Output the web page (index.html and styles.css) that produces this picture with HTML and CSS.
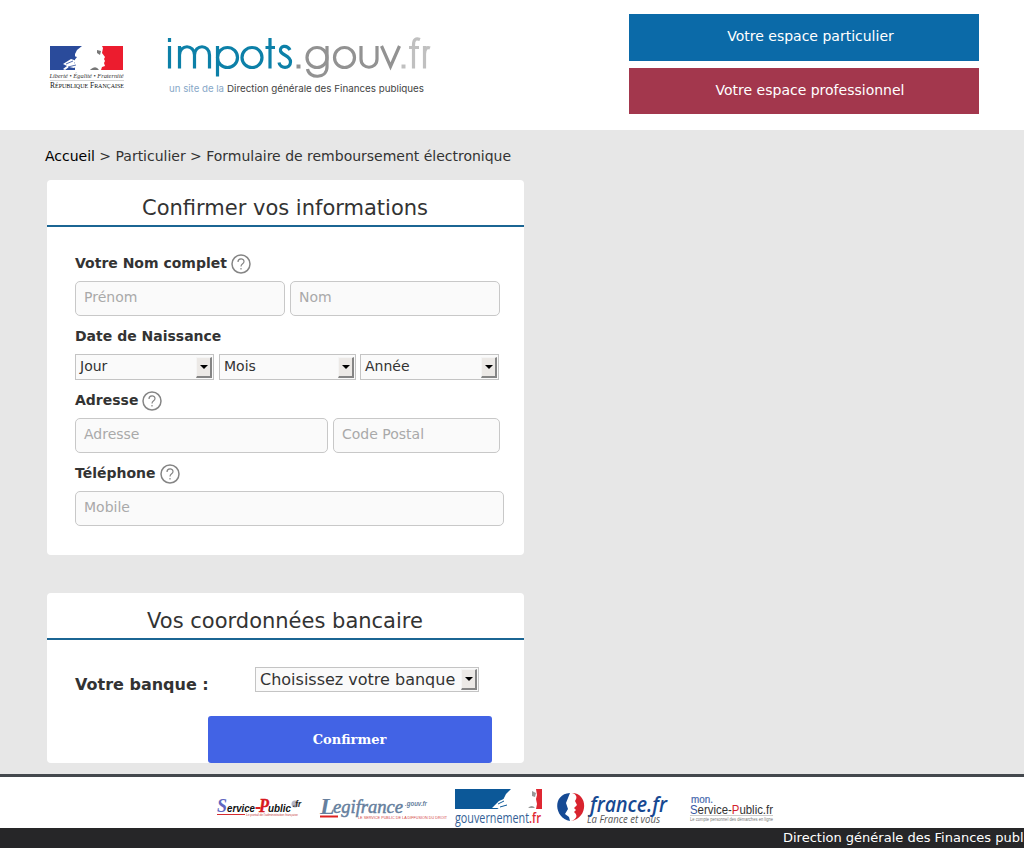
FILE: index.html
```html
<!DOCTYPE html>
<html lang="fr">
<head>
<meta charset="utf-8">
<title>Formulaire</title>
<link rel="stylesheet" href="styles.css">
</head>
<body>
<header class="header">
  <svg class="marianne" width="78" height="46" viewBox="0 0 78 46">
    <rect x="2" y="1" width="25" height="24" fill="#2a4b9b"/>
    <path d="M27 1h7l-5 4-3 6 3 1-4 5 3 3-2 5h-3z" fill="#2a4b9b"/>
    <path d="M15 19l8-5 6 2-3 2 5 2-5 3-5-1-4 3-2-1 4-3z" fill="#fff"/>
    <path d="M18 19l7-3M20 22l8-2" stroke="#2a4b9b" stroke-width=".8" fill="none"/>
    <path d="M75 1v24H53l1-3 3-1-1-3 1-2-1-2 1-2-3-4 1-5-1-2z" fill="#ec1c2e"/>
    <path d="M49 5l4 1-1 4-3-2zM43 24q5-4 8 1h-9z" fill="#777"/>
    <text x="1.500" y="33" textLength="74" lengthAdjust="spacingAndGlyphs" class="serif" font-size="6" font-style="italic" fill="#333">Liberté • Égalité • Fraternité</text>
    <path d="M2 35.500h74" stroke="#aaa" stroke-width=".5"/>
    <text x="2" y="43" textLength="74" lengthAdjust="spacingAndGlyphs" class="serif" font-size="7.500" fill="#111">R<tspan font-size="6">ÉPUBLIQUE</tspan> F<tspan font-size="6">RANÇAISE</tspan></text>
  </svg>
  <svg class="wordmark" width="270" height="66" viewBox="0 0 270 66">
    <g fill="none" stroke-width="3.200">
      <g stroke="#0c80a8">
        <path d="M5.500 12v22.500M5.500 4v4M15.500 34.500V12M15.500 21C15.500 10 30.500 10 30.500 21V34.500M30.500 21C30.500 10 45.500 10 45.500 21V34.500"/>
        <path d="M53.500 12v30.500"/><circle cx="63.500" cy="23.500" r="10"/><circle cx="88" cy="23.500" r="10"/>
        <path d="M106 4v30.500M101.500 13.500h9.500M126 16C123 10 115.500 12 116.500 17C118 22 126.500 21 126.500 28C126.500 35 116 35 115 28.500"/>
      </g>
      <g stroke="#929292">
        <circle cx="153" cy="23.500" r="10"/><path d="M163 12v21C163 45 145 45 143.500 35"/>
        <circle cx="180.500" cy="23.500" r="10"/>
        <path d="M197 12v13C197 36 213 36 213 25V12M217.500 12l9 20.500 9-20.500"/>
      </g>
      <path stroke="#c0c0c0" d="M249.500 34.500V11C249.500 5 252 4 256 5.500M245 13.500h10M260.500 34.500V12M260.500 20Q261 12 266 14"/>
    </g>
    <path d="M132.500 30.500h4v4h-4z" fill="#929292"/><path d="M237.500 30.500h4v4h-4z" fill="#c0c0c0"/>
    <text x="5" y="57.500" class="geo" font-size="9.500" textLength="55" lengthAdjust="spacingAndGlyphs" fill="#88a8c8">un site de la</text>
    <text x="63" y="57.500" class="geo" font-size="9.500" textLength="197" lengthAdjust="spacingAndGlyphs" fill="#444">Direction générale des Finances publiques</text>
  </svg>
  <nav class="spaces">
    <div class="space space-blue">Votre espace particulier</div>
    <div class="space space-red">Votre espace professionnel</div>
  </nav>
</header>
<main class="main">
  <div class="crumbs"><span class="home">Accueil</span> &gt; Particulier &gt; Formulaire de remboursement électronique</div>
  <section class="card card-info">
    <h2 class="title">Confirmer vos informations</h2>
    <div class="fields">
      <div class="label">Votre Nom complet <svg class="help" width="20" height="20" viewBox="0 0 20 20"><circle cx="10" cy="10" r="9"/><path d="M7 8C7 4 13 4 13 7.500C13 10 10 9.500 10 12.500M10 14v1.500"/></svg></div>
      <div class="row"><div class="input half">Prénom</div><div class="input half">Nom</div></div>
      <div class="label label-date">Date de Naissance</div>
      <div class="row row-date">
        <div class="select day">Jour<i class="arrow"></i></div>
        <div class="select month">Mois<i class="arrow"></i></div>
        <div class="select year">Année<i class="arrow"></i></div>
      </div>
      <div class="label label-address">Adresse <svg class="help" width="20" height="20" viewBox="0 0 20 20"><circle cx="10" cy="10" r="9"/><path d="M7 8C7 4 13 4 13 7.500C13 10 10 9.500 10 12.500M10 14v1.500"/></svg></div>
      <div class="row"><div class="input address">Adresse</div><div class="input postal">Code Postal</div></div>
      <div class="label label-phone">Téléphone <svg class="help" width="20" height="20" viewBox="0 0 20 20"><circle cx="10" cy="10" r="9"/><path d="M7 8C7 4 13 4 13 7.500C13 10 10 9.500 10 12.500M10 14v1.500"/></svg></div>
      <div class="row"><div class="input phone">Mobile</div></div>
    </div>
  </section>
  <section class="card card-bank">
    <h2 class="title">Vos coordonnées bancaire</h2>
    <div class="bank-row"><span class="bank-label">Votre banque :</span><div class="select bank">Choisissez votre banque<i class="arrow"></i></div></div>
    <div class="confirm">Confirmer</div>
  </section>
</main>
<footer>
  <div class="partners">
    <svg width="590" height="50" viewBox="210 777 590 50">
      <g font-style="italic" font-weight="bold" class="sans">
        <text x="217" y="812" font-size="18" fill="#6066c0" class="serif">S</text>
        <text x="227" y="812" font-size="10" textLength="28" lengthAdjust="spacingAndGlyphs" fill="#111">ervice</text>
        <path d="M255.500 808h5" stroke="#d22" stroke-width="2"/>
        <text x="259" y="812" font-size="18" textLength="10" lengthAdjust="spacingAndGlyphs" fill="#d81920" stroke="#d81920" stroke-width=".4" class="serif">P</text>
        <text x="268" y="812" font-size="10" textLength="23" lengthAdjust="spacingAndGlyphs" fill="#111">ublic</text>
        <circle cx="295" cy="804" r="3.500" fill="#b4b4c4"/>
        <text x="293" y="807" font-size="9" textLength="8" lengthAdjust="spacingAndGlyphs" fill="#222">.fr</text>
      </g>
      <path d="M217 814.500h28" stroke="#d42b30"/>
      <text x="246" y="816" class="sans" font-size="3.500" textLength="52" fill="#c55">Le portail de l'administration française</text>
      <g class="serif" font-style="italic" fill="#667f9e">
        <text x="320" y="813.500" font-size="24" font-weight="bold">L</text>
        <text x="333" y="813" font-size="19" textLength="70" lengthAdjust="spacingAndGlyphs" stroke="#667f9e" stroke-width=".5">egifrance</text>
        <text x="405" y="805.500" class="sans" font-weight="bold" font-size="6.500" textLength="22" lengthAdjust="spacingAndGlyphs">.gouv.fr</text>
      </g>
      <path d="M320 816.500h18" stroke="#d22" stroke-width="2"/>
      <text x="358" y="819" class="sans" font-size="4" textLength="89" lengthAdjust="spacingAndGlyphs" fill="#d34545">LE SERVICE PUBLIC DE LA DIFFUSION DU DROIT</text>
      <path d="M455 789h56l-5 5-3 6 2 1-4 4-3 4h-43z" fill="#0c5898"/>
      <path d="M492 808l7-7 7-3 5 2-4 2 5 3-7 1-5 3-3-1 3-3-3 3z" fill="#fff"/>
      <path d="M498 804l6-3M500 807l7-2" stroke="#0c5898"/>
      <path d="M542 789v20h-6l1-5-1-5 1-4-1-6z" fill="#df2832"/><path d="M532 791l4 2-1 4-3-1zM528 808q4-4 7 0z" fill="#999"/>
      <text x="455" y="822.500" class="opens" font-size="14" textLength="74" lengthAdjust="spacingAndGlyphs" fill="#355f96">gouvernement</text>
      <text x="529" y="822.500" class="opens" font-size="14" font-weight="600" textLength="12" lengthAdjust="spacingAndGlyphs" fill="#df2832">.fr</text>
      <path d="M570 793C552 794 554 818 570 821L569 817 565 814 568 809 566 803Z" fill="#164a94"/>
      <path d="M572 793C588 793 589 818 571 821C577 819 578 815 574 812L576 810 574 808 577 805 575 801C578 797 576 794 572 793Z" fill="#d9232e"/>
      <text x="590" y="812" class="opens" font-size="22" font-weight="600" font-style="italic" textLength="77" lengthAdjust="spacingAndGlyphs" fill="#174992">france.fr</text>
      <text x="587" y="823" class="opens" font-size="10" font-style="italic" textLength="73" lengthAdjust="spacingAndGlyphs" fill="#555">La France et vous</text>
      <g class="sans">
        <text x="691" y="803" font-size="10" textLength="22" lengthAdjust="spacingAndGlyphs" fill="#4667ad" stroke="#4667ad" stroke-width=".2">mon.</text>
        <text x="690" y="814" font-size="12" textLength="83" lengthAdjust="spacingAndGlyphs" fill="#333"><tspan fill="#3657a5">S</tspan>ervice-<tspan fill="#d3202c">P</tspan>ublic.fr</text>
        <path d="M690 815.500h83" stroke="#aaa" stroke-width=".6"/>
        <text x="690" y="820.500" font-size="4.500" textLength="83" lengthAdjust="spacingAndGlyphs" fill="#777">Le compte personnel des démarches en ligne</text>
      </g>
    </svg>
  </div>
  <div class="legal">Direction générale des Finances publiques</div>
</footer>
</body>
</html>
```
FILE: styles.css
```css
* { box-sizing: border-box; }
body { margin: 0; width: 1024px; height: 848px; overflow: hidden; background: #e7e7e7; color: #333; font: 14px/20px "DejaVu Sans", sans-serif; }
.header { height: 130px; background: #fff; display: flex; align-items: flex-start; padding: 14px 45px 0 48px; }
.marianne { margin-top: 31px; }
.wordmark { margin: 20px 0 0 38px; overflow: visible; }
.serif { font-family: "Liberation Serif", serif; }
.sans { font-family: "Liberation Sans", sans-serif; }
.geo { font-family: Inter, sans-serif; }
.opens { font-family: "Open Sans", sans-serif; }
.spaces { margin-left: auto; width: 350px; display: grid; gap: 7px; }
.space { height: 47px; padding-top: 12px; text-align: center; color: #fff; padding-left: 13px; }
.space-blue { background: #0b6aa8; }
.space-red { height: 46px; background: #a3374d; padding-left: 12px; }
.main { height: 644px; padding: 16px 0 0 45px; }
.crumbs { height: 34px; letter-spacing: -0.01px; }
.home { color: #000; }
.card { width: 477px; margin-left: 2px; background: #fff; border-radius: 4px; }
.card-info { height: 375px; margin-bottom: 38px; }
.card-bank { height: 170px; }
.title { margin: 0; height: 47px; padding: 13px 1px 0 0; border-bottom: 2px solid #1b6593; text-align: center; font-size: 21px; line-height: 30px; font-weight: 400; }
.fields { padding: 26px 0 0 28px; }
.label { height: 28px; font-weight: 700; display: flex; gap: 4px; }
.help { margin-top: 1px; fill: none; stroke: #858585; stroke-width: 1.5; }
.help path { stroke-width: 1.2; }
.row { display: flex; gap: 5px; }
.input { height: 35px; border: 1px solid #c8c8c8; border-radius: 5px; background: #fafafa; color: #a9a9a9; padding: 5px 8px; }
.half { width: 210px; }
.address { width: 253px; }
.postal { width: 167px; }
.phone { width: 429px; }
.label-date { margin-top: 10px; }
.row-date { gap: 0; }
.select { display: flex; justify-content: space-between; height: 26px; border: 1px solid #c4c4c4; background: #fafafa; padding: 2px 1px 2px 4px; line-height: 19px; }
.day { width: 139px; margin-right: 5px; }
.month { width: 137px; margin-right: 4px; }
.year { width: 139px; }
.arrow { width: 16px; height: 21px; background: #ece9e6; border: solid; border-width: 1px 2px 2px 1px; border-color: #f5f5f5 #858585 #858585 #f5f5f5; display: flex; align-items: center; justify-content: center; }
.arrow::before { content: ""; border: 4px solid transparent; border-top-color: #000; border-bottom: 0; }
.label-address { margin-top: 10px; }
.label-phone { margin-top: 10px; }
.bank-row { display: flex; padding: 27px 0 0 28px; height: 76px; font-size: 16px; }
.bank-label { width: 180px; padding-top: 8px; font-weight: 700; }
.bank { width: 224px; height: 25px; padding-top: 1px; line-height: 21px; }
.confirm { width: 284px; height: 47px; margin-left: 161px; padding-right: 1px; border-radius: 3px; background: #4263e5; color: #fff; text-align: center; font: bold 13px/47px "DejaVu Serif", serif; }
.partners { height: 54px; padding-left: 210px; background: #fff; border-top: 3px solid #43484d; }
.partners svg { display: block; }
.legal { height: 20px; padding-left: 783px; background: #262628; color: #fff; font-size: 13px; white-space: nowrap; overflow: hidden; }
```
